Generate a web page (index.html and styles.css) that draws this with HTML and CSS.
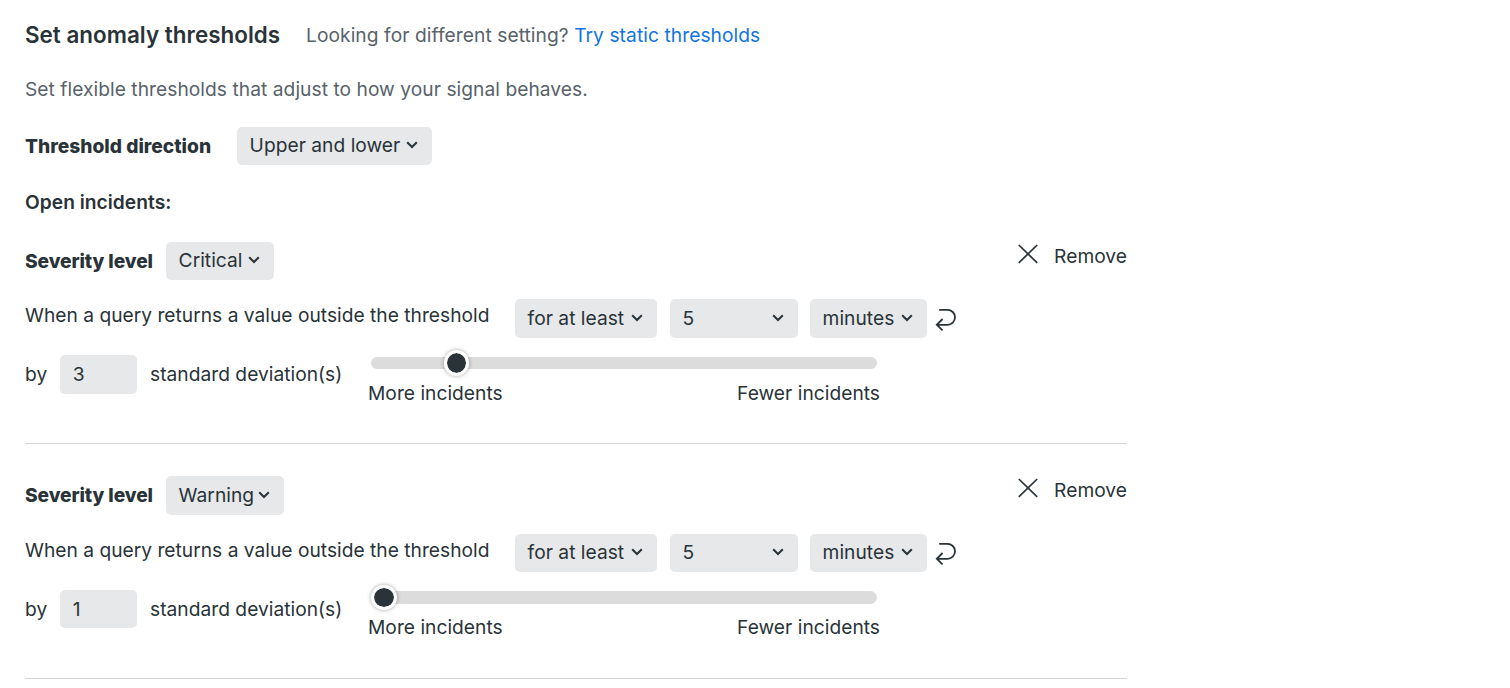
FILE: index.html
```html
<!DOCTYPE html>
<html lang="en">
<head>
<meta charset="utf-8">
<title>Set anomaly thresholds</title>
<link rel="stylesheet" href="styles.css">
</head>
<body>
<svg width="0" height="0" class="sprite">
  <symbol id="chevron" viewBox="0 0 12 8"><path d="M1.2 1.2 6 6 10.8 1.2"/></symbol>
  <symbol id="close" viewBox="0 0 20 20"><path d="M.8 1 19.2 18.8M19.2 1 .8 18.8"/></symbol>
  <symbol id="return" viewBox="0 0 22 24"><path d="M4.2 1.8H12.5a7.4 7.4 0 0 1 0 15H1.8M7.6 11 1.8 16.8 7.6 22.4"/></symbol>
</svg>
<main class="panel">
  <header class="header">
    <h1 class="title">Set anomaly thresholds</h1>
    <p class="hint">Looking for different setting? <a class="link">Try static thresholds</a></p>
  </header>
  <p class="description">Set flexible thresholds that adjust to how your signal behaves.</p>
  <div class="direction">
    <span class="label label-direction">Threshold direction</span>
    <button class="select select-direction"><span>Upper and lower</span><svg class="chevron"><use href="#chevron"/></svg></button>
  </div>
  <h2 class="open">Open incidents:</h2>

  <section class="threshold">
    <div class="severity">
      <span class="label label-severity">Severity level</span>
      <button class="select select-critical"><span>Critical</span><svg class="chevron"><use href="#chevron"/></svg></button>
      <button class="remove"><svg class="close"><use href="#close"/></svg><span>Remove</span></button>
    </div>
    <div class="condition">
      <span class="query">When a query returns a value outside the threshold</span>
      <button class="select select-for"><span>for at least</span><svg class="chevron"><use href="#chevron"/></svg></button>
      <button class="select select-count"><span>5</span><svg class="chevron"><use href="#chevron"/></svg></button>
      <button class="select select-unit"><span>minutes</span><svg class="chevron"><use href="#chevron"/></svg></button>
      <svg class="return"><use href="#return"/></svg>
    </div>
    <div class="deviation">
      <span class="by">by</span>
      <span class="field">3</span>
      <span class="unit">standard deviation(s)</span>
      <div class="slider">
        <div class="track"><span class="thumb" style="left:72.7px"></span></div>
        <div class="ends"><span>More incidents</span><span>Fewer incidents</span></div>
      </div>
    </div>
  </section>

  <section class="threshold threshold-warning">
    <div class="severity">
      <span class="label label-severity">Severity level</span>
      <button class="select select-warning"><span>Warning</span><svg class="chevron"><use href="#chevron"/></svg></button>
      <button class="remove"><svg class="close"><use href="#close"/></svg><span>Remove</span></button>
    </div>
    <div class="condition">
      <span class="query">When a query returns a value outside the threshold</span>
      <button class="select select-for"><span>for at least</span><svg class="chevron"><use href="#chevron"/></svg></button>
      <button class="select select-count"><span>5</span><svg class="chevron"><use href="#chevron"/></svg></button>
      <button class="select select-unit"><span>minutes</span><svg class="chevron"><use href="#chevron"/></svg></button>
      <svg class="return"><use href="#return"/></svg>
    </div>
    <div class="deviation">
      <span class="by">by</span>
      <span class="field">1</span>
      <span class="unit">standard deviation(s)</span>
      <div class="slider">
        <div class="track"><span class="thumb" style="left:0"></span></div>
        <div class="ends"><span>More incidents</span><span>Fewer incidents</span></div>
      </div>
    </div>
  </section>
</main>
</body>
</html>
```
FILE: styles.css
```css
* { box-sizing: border-box; }
body {
  margin: 0;
  background: #fff;
  color: #293338;
  font: 400 19.2px/24px Inter, "Liberation Sans", sans-serif;
  letter-spacing: .02px;
  white-space: nowrap;
  overflow: hidden;
}
h1, h2, p { margin: 0; }
button { border: 0; background: none; font: inherit; letter-spacing: inherit; color: inherit; padding: 0; }
svg { fill: none; stroke: #293338; flex: none; }
.sprite { display: block; }
.panel { width: 1102px; margin-left: 25px; }

.header { display: flex; align-items: center; height: 70px; }
.title { width: 281px; font-size: 22.4px; font-weight: 600; letter-spacing: .03px; }
.hint { color: #586269; letter-spacing: .065px; }
.link { color: #1174e2; }
.description { color: #586269; height: 38px; line-height: 38px; letter-spacing: .045px; }

.direction { display: flex; height: 38px; margin-top: 19px; align-items: center; }
.label { font-weight: 800; letter-spacing: -.1px; }
.label-direction { width: 212px; letter-spacing: 0; }
.label-severity { width: 141px; }
.open { margin-top: 18px; height: 38px; line-height: 38px; font-size: 19.2px; font-weight: 600; letter-spacing: .03px; }

.select {
  display: flex;
  align-items: center;
  justify-content: space-between;
  height: 38.4px;
  padding: 0 13.8px 1.8px 12.6px;
  border-radius: 5px;
  background: #e6e8e9;
}
.chevron { width: 12px; height: 8px; stroke-width: 2; }
.select-direction { width: 195px; }
.select-critical { width: 108px; }
.select-warning { width: 118px; }
.select-for { width: 142px; margin-right: 13px; }
.select-count { width: 128px; margin-right: 12px; }
.select-unit { width: 117px; margin-right: 8px; }

.threshold { height: 235px; padding-top: 32.5px; border-bottom: 1px solid #d0d3d4; }
.open + .threshold { height: 222.9px; padding-top: 20.9px; }
.severity { display: flex; align-items: center; height: 38.4px; }
.remove { display: flex; align-items: center; gap: 16.5px; margin: -10px 0 0 auto; }
.threshold-warning .remove { margin-top: -11.2px; }
.threshold-warning .label { margin-top: -1.2px; }
.close { width: 20px; height: 20px; margin-top: -4px; stroke-width: 1.7; }
.condition { display: flex; align-items: center; height: 38.4px; margin-top: 19.1px; }
.query { width: 490px; padding-bottom: 6.8px; letter-spacing: .01px; }
.return { width: 22px; height: 24px; margin-top: 2px; stroke-width: 1.8; }
.deviation { display: flex; height: 38.4px; margin-top: 17.6px; line-height: 38.4px; }
.by { width: 35px; }
.field { width: 77px; height: 38.4px; padding-left: 12.8px; border-radius: 5px; background: #e6e8e9; }
.unit { width: 221px; padding-left: 13px; }
.slider { width: 512px; padding-top: 1.2px; }
.track { position: relative; width: 506px; height: 12.8px; margin-left: 13px; border-radius: 7px; background: #dcdcdc; }
.thumb {
  position: absolute;
  top: -6.4px;
  width: 25.6px;
  height: 25.6px;
  border: 3px solid #fff;
  border-radius: 50%;
  background: #293338 padding-box;
  box-shadow: 0 0 4px rgba(0, 0, 0, .35);
}
.ends { display: flex; justify-content: space-between; width: 512px; margin-left: 10px; padding-top: 12px; line-height: 24px; }
.threshold-warning .ends { padding-top: 11px; }
```
